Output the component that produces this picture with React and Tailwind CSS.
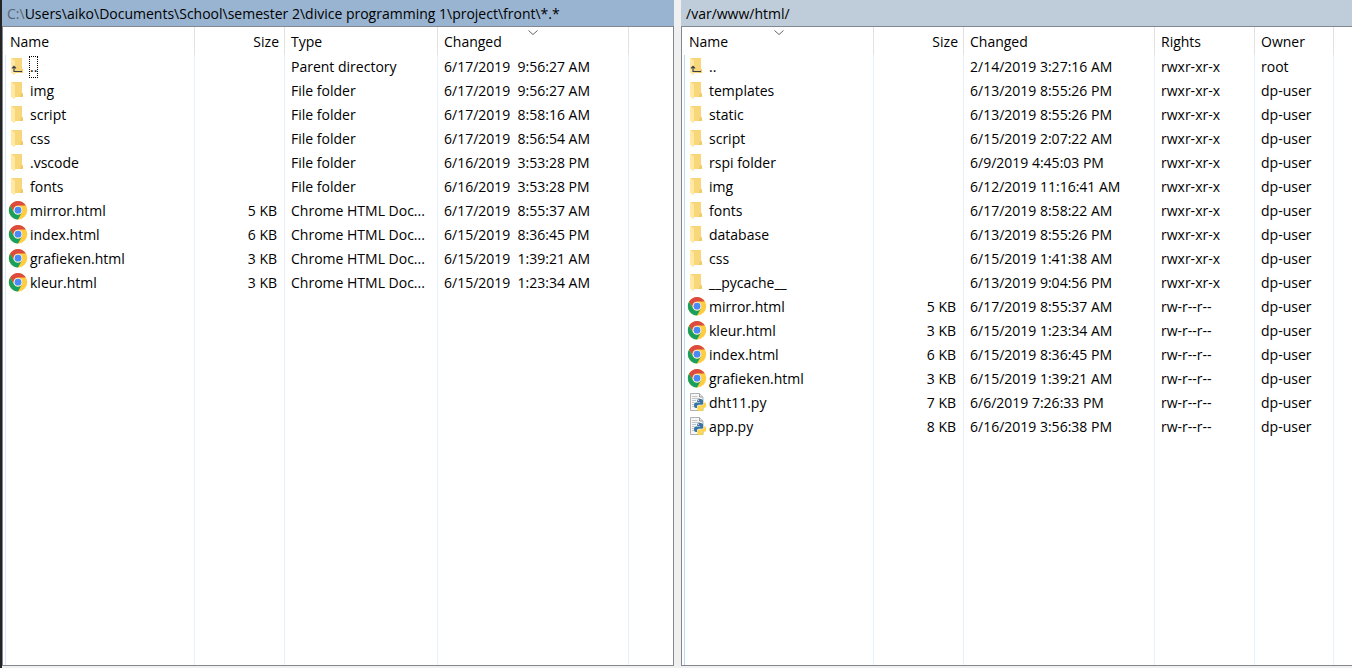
const localColumns = [
    { key: 'name', label: 'Name', width: 'w-[190px]' },
    { key: 'size', label: 'Size', width: 'w-[90px]', right: true },
    { key: 'type', label: 'Type', width: 'w-[153px]' },
    { key: 'changed', label: 'Changed', width: 'w-[191px]', sorted: true },
];

const remoteColumns = [
    { key: 'name', label: 'Name', width: 'w-[190px]', sorted: true },
    { key: 'size', label: 'Size', width: 'w-[90px]', right: true },
    { key: 'changed', label: 'Changed', width: 'w-[191px]' },
    { key: 'rights', label: 'Rights', width: 'w-[100px]' },
    { key: 'owner', label: 'Owner', width: 'w-[79px]' },
];

const localFiles = [
    { icon: 'up', name: '..', type: 'Parent directory', changed: '6/17/2019  9:56:27 AM', focused: true },
    { icon: 'folder', name: 'img', type: 'File folder', changed: '6/17/2019  9:56:27 AM' },
    { icon: 'folder', name: 'script', type: 'File folder', changed: '6/17/2019  8:58:16 AM' },
    { icon: 'folder', name: 'css', type: 'File folder', changed: '6/17/2019  8:56:54 AM' },
    { icon: 'folder', name: '.vscode', type: 'File folder', changed: '6/16/2019  3:53:28 PM' },
    { icon: 'folder', name: 'fonts', type: 'File folder', changed: '6/16/2019  3:53:28 PM' },
    { icon: 'chrome', name: 'mirror.html', size: '5 KB', type: 'Chrome HTML Doc...', changed: '6/17/2019  8:55:37 AM' },
    { icon: 'chrome', name: 'index.html', size: '6 KB', type: 'Chrome HTML Doc...', changed: '6/15/2019  8:36:45 PM' },
    { icon: 'chrome', name: 'grafieken.html', size: '3 KB', type: 'Chrome HTML Doc...', changed: '6/15/2019  1:39:21 AM' },
    { icon: 'chrome', name: 'kleur.html', size: '3 KB', type: 'Chrome HTML Doc...', changed: '6/15/2019  1:23:34 AM' },
];

const remoteFiles = [
    { icon: 'up', name: '..', changed: '2/14/2019 3:27:16 AM', rights: 'rwxr-xr-x', owner: 'root' },
    { icon: 'folder', name: 'templates', changed: '6/13/2019 8:55:26 PM', rights: 'rwxr-xr-x', owner: 'dp-user' },
    { icon: 'folder', name: 'static', changed: '6/13/2019 8:55:26 PM', rights: 'rwxr-xr-x', owner: 'dp-user' },
    { icon: 'folder', name: 'script', changed: '6/15/2019 2:07:22 AM', rights: 'rwxr-xr-x', owner: 'dp-user' },
    { icon: 'folder', name: 'rspi folder', changed: '6/9/2019 4:45:03 PM', rights: 'rwxr-xr-x', owner: 'dp-user' },
    { icon: 'folder', name: 'img', changed: '6/12/2019 11:16:41 AM', rights: 'rwxr-xr-x', owner: 'dp-user' },
    { icon: 'folder', name: 'fonts', changed: '6/17/2019 8:58:22 AM', rights: 'rwxr-xr-x', owner: 'dp-user' },
    { icon: 'folder', name: 'database', changed: '6/13/2019 8:55:26 PM', rights: 'rwxr-xr-x', owner: 'dp-user' },
    { icon: 'folder', name: 'css', changed: '6/15/2019 1:41:38 AM', rights: 'rwxr-xr-x', owner: 'dp-user' },
    { icon: 'folder', name: '__pycache__', changed: '6/13/2019 9:04:56 PM', rights: 'rwxr-xr-x', owner: 'dp-user' },
    { icon: 'chrome', name: 'mirror.html', size: '5 KB', changed: '6/17/2019 8:55:37 AM', rights: 'rw-r--r--', owner: 'dp-user' },
    { icon: 'chrome', name: 'kleur.html', size: '3 KB', changed: '6/15/2019 1:23:34 AM', rights: 'rw-r--r--', owner: 'dp-user' },
    { icon: 'chrome', name: 'index.html', size: '6 KB', changed: '6/15/2019 8:36:45 PM', rights: 'rw-r--r--', owner: 'dp-user' },
    { icon: 'chrome', name: 'grafieken.html', size: '3 KB', changed: '6/15/2019 1:39:21 AM', rights: 'rw-r--r--', owner: 'dp-user' },
    { icon: 'python', name: 'dht11.py', size: '7 KB', changed: '6/6/2019 7:26:33 PM', rights: 'rw-r--r--', owner: 'dp-user' },
    { icon: 'python', name: 'app.py', size: '8 KB', changed: '6/16/2019 3:56:38 PM', rights: 'rw-r--r--', owner: 'dp-user' },
];

function FolderIcon({ up }) {
    return (
        <svg viewBox="0 0 20 20" className="size-5 shrink-0" aria-hidden="true">
            <path d="M3.500 1H14v10.500l1 1V16H5z" fill="#f8d67a" />
            <path d="M13 12.500h2V16h-3.500z" fill="#f1c967" />
            <path d="M3 1l4 2.500V18l-1.500-.5L3 15.500z" fill="#ffe8a3" />
            {up && <path d="M6 15V9.500M4 11.300l2-2 2 2M5.500 14.500H14" fill="none" stroke="#3b4148" strokeWidth="1.200" />}
        </svg>
    );
}

function ChromeIcon() {
    return (
        <svg viewBox="0 0 20 20" className="size-5 shrink-0" aria-hidden="true">
            <circle cx="10" cy="9.200" r="9.200" fill="#ffcd41" />
            <path d="M2.100 4.600A9.200 9.200 0 0 1 17.900 4.600H10A4.600 4.600 0 0 0 6 11.500z" fill="#dc4b3e" />
            <path d="M2.100 4.600A9.200 9.200 0 0 0 10 18.400L14 11.500A4.600 4.600 0 0 1 6 11.500z" fill="#17a05e" />
            <circle cx="10" cy="9.200" r="4.300" fill="#f4f6fa" />
            <circle cx="10" cy="9.200" r="3.400" fill="#4a8af4" />
        </svg>
    );
}

function PythonIcon() {
    return (
        <svg viewBox="0 0 20 20" className="size-5 shrink-0" aria-hidden="true">
            <path d="M3.500.5h9l3.500 3.500v13.500H3.500z" fill="#f7f7f7" stroke="#b0b0b0" />
            <path d="M12.500.5V4H16" fill="#dedede" stroke="#a3a3a3" />
            <path d="M5 3.500h5.500M5 5.500h8M5 7.500h4M5 9.500h2.500M5 11.500h2M5 13.500h2" stroke="#c4c4c4" />
            <g transform="translate(7 6)">
                <path d="M6 0C3.500 0 3.200 1 3.200 1.800V3h3v.5H2C.8 3.500 0 4.500 0 6.200S.8 9 1.800 9H3V7.500C3 6.500 3.800 5.800 4.700 5.800h3C8.500 5.800 9 5 9 4.300V1.800C9 .6 7.700 0 6 0z" fill="#3873a5" />
                <path d="M9.500 3.500V5c0 1-.8 1.600-1.600 1.600h-3c-.8 0-1.500.7-1.500 1.500v2.300c0 1 1.300 1.600 2.800 1.600s2.900-.5 2.900-1.600V9.200h-3v-.5h4.300c1.200 0 1.800-1 1.800-2.500S11.600 3.500 10.700 3.500z" fill="#ffd343" />
                <circle cx="4.600" cy="1.600" r=".5" fill="#fff" />
            </g>
        </svg>
    );
}

function FileIcon({ kind }) {
    if (kind === 'chrome') return <ChromeIcon />;
    if (kind === 'python') return <PythonIcon />;
    return <FolderIcon up={kind === 'up'} />;
}

function SortMark() {
    return (
        <svg viewBox="0 0 11 6" className="absolute top-[3px] left-1/2 h-1.5 w-[11px] -translate-x-1/2" aria-hidden="true">
            <path d="M1 .5l4.500 4 4.500-4" fill="none" stroke="#666" />
        </svg>
    );
}

function FilePanel({ label, path, columns, files, accent, barColor, frame }) {
    return (
        <section aria-label={label} className="flex min-w-0 flex-col overflow-hidden">
            <div className={`h-[26px] shrink-0 truncate px-[5px] leading-[27px] ${barColor}`}>{path}</div>

            <div className={`min-h-0 flex-1 overflow-hidden border-[#828790] bg-white pl-[2px] ${frame}`}>
                <table className="h-full w-full table-fixed border-separate border-spacing-0 text-left">
                    <thead>
                        <tr className="h-7">
                            {columns.map((col, i) => (
                                <th key={col.key} scope="col" className={`relative border-r border-[#e2e2e2] p-0 font-normal ${col.width}`}>
                                    <button type="button" className={`block h-7 w-full pt-px ${i === 0 ? 'pl-[5px]' : 'pl-1.5'} ${col.right ? 'pr-[5px] text-right' : 'text-left'}`}>
                                        {col.label}
                                    </button>
                                    {col.sorted && <SortMark />}
                                </th>
                            ))}
                            <td className="p-0" />
                        </tr>
                    </thead>
                    <tbody>
                        {files.map((file) => (
                            <tr key={file.name} className="h-6">
                                {columns.map((col, i) => (
                                    <td
                                        key={col.key}
                                        className={`h-6 truncate border-r border-[#e6f0fa] p-0 whitespace-pre ${i === 0 ? `border-l ${accent}` : 'pl-1.5'} ${col.right ? 'pr-[7px] text-right' : ''}`}
                                    >
                                        {i === 0 ? (
                                            <div className="flex h-6 items-center gap-0.5 pl-0.5">
                                                <FileIcon kind={file.icon} />
                                                <span className={file.focused ? 'h-5 leading-5 outline-1 outline-dotted outline-black' : ''}>{file.name}</span>
                                            </div>
                                        ) : (
                                            file[col.key]
                                        )}
                                    </td>
                                ))}
                                <td className="p-0" />
                            </tr>
                        ))}
                        {/* Stretches the column lines down to the bottom of the list */}
                        <tr>
                            {columns.map((col, i) => (
                                <td key={col.key} className={`border-r border-[#e6f0fa] p-0 ${i === 0 ? `border-l ${accent}` : ''}`} />
                            ))}
                            <td className="p-0" />
                        </tr>
                    </tbody>
                </table>
            </div>
        </section>
    );
}

export default function App() {
    return (
        <main className="grid h-screen grid-cols-[672fr_671fr] gap-[7px] border-l-2 border-[#242424] bg-[#f0f0f0] pb-0.5 font-['Open_Sans',sans-serif] text-sm leading-6 text-black">
            <FilePanel
                label="Local files"
                path={<><span className="text-[#5a6470]">C:\</span>Users\aiko\Documents\School\semester 2\divice programming 1\project\front\*.*</>}
                columns={localColumns}
                files={localFiles}
                accent="border-l-[#dbe9f9]"
                barColor="bg-[#99b4d1]"
                frame="border"
            />
            {/* The remote list runs off the right edge, so it has no right border */}
            <FilePanel
                label="Remote files"
                path="/var/www/html/"
                columns={remoteColumns}
                files={remoteFiles}
                accent="border-l-[#b5d8fb]"
                barColor="bg-[#bfcddb]"
                frame="border-y border-l"
            />
        </main>
    );
}
